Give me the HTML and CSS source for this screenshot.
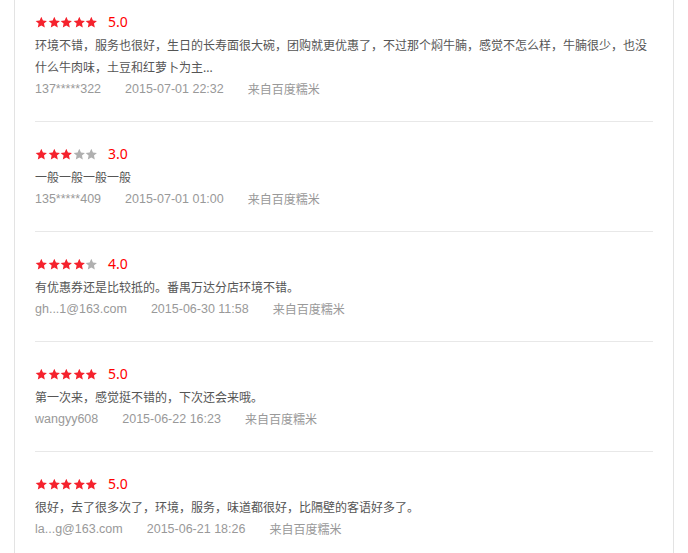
FILE: index.html
```html
<!DOCTYPE html>
<html lang="zh-CN">
<head>
    <meta charset="UTF-8">
    <meta name="viewport" content="width=device-width, initial-scale=1.0">
    <link rel="stylesheet" href="styles.css">
    <title>评论</title>
</head>
<body>
    <svg class="defs" width="0" height="0">
        <symbol id="star" viewBox="0 0 24 24">
            <path d="M12 1.2l3.2 7 7.6.8-5.7 5.1 1.6 7.5L12 17.8l-6.7 3.8 1.6-7.5L1.2 9l7.6-.8z"/>
        </symbol>
    </svg>

    <div class="comments">
        <div class="review">
            <div class="rate">
                <span class="stars">
                    <svg class="on"><use href="#star"/></svg><svg class="on"><use href="#star"/></svg><svg class="on"><use href="#star"/></svg><svg class="on"><use href="#star"/></svg><svg class="on"><use href="#star"/></svg>
                </span>
                <span class="score">5.0</span>
            </div>
            <p class="text">环境不错，服务也很好，生日的长寿面很大碗，团购就更优惠了，不过那个焖牛腩，感觉不怎么样，牛腩很少，也没什么牛肉味，土豆和红萝卜为主...</p>
            <div class="meta"><span>137*****322</span><span>2015-07-01 22:32</span><span class="src">来自百度糯米</span></div>
        </div>

        <div class="review">
            <div class="rate">
                <span class="stars">
                    <svg class="on"><use href="#star"/></svg><svg class="on"><use href="#star"/></svg><svg class="on"><use href="#star"/></svg><svg><use href="#star"/></svg><svg><use href="#star"/></svg>
                </span>
                <span class="score">3.0</span>
            </div>
            <p class="text">一般一般一般一般</p>
            <div class="meta"><span>135*****409</span><span>2015-07-01 01:00</span><span class="src">来自百度糯米</span></div>
        </div>

        <div class="review">
            <div class="rate">
                <span class="stars">
                    <svg class="on"><use href="#star"/></svg><svg class="on"><use href="#star"/></svg><svg class="on"><use href="#star"/></svg><svg class="on"><use href="#star"/></svg><svg><use href="#star"/></svg>
                </span>
                <span class="score">4.0</span>
            </div>
            <p class="text">有优惠券还是比较抵的。番禺万达分店环境不错。</p>
            <div class="meta"><span>gh...1@163.com</span><span>2015-06-30 11:58</span><span class="src">来自百度糯米</span></div>
        </div>

        <div class="review">
            <div class="rate">
                <span class="stars">
                    <svg class="on"><use href="#star"/></svg><svg class="on"><use href="#star"/></svg><svg class="on"><use href="#star"/></svg><svg class="on"><use href="#star"/></svg><svg class="on"><use href="#star"/></svg>
                </span>
                <span class="score">5.0</span>
            </div>
            <p class="text">第一次来，感觉挺不错的，下次还会来哦。</p>
            <div class="meta"><span>wangyy608</span><span>2015-06-22 16:23</span><span class="src">来自百度糯米</span></div>
        </div>

        <div class="review">
            <div class="rate">
                <span class="stars">
                    <svg class="on"><use href="#star"/></svg><svg class="on"><use href="#star"/></svg><svg class="on"><use href="#star"/></svg><svg class="on"><use href="#star"/></svg><svg class="on"><use href="#star"/></svg>
                </span>
                <span class="score">5.0</span>
            </div>
            <p class="text">很好，去了很多次了，环境，服务，味道都很好，比隔壁的客语好多了。</p>
            <div class="meta"><span>la...g@163.com</span><span>2015-06-21 18:26</span><span class="src">来自百度糯米</span></div>
        </div>
    </div>
</body>
</html>
```

FILE: styles.css
```css
body {
    margin: 0;
    background-color: #fff;
    font-family: "Noto Sans", "Noto Sans CJK SC", sans-serif;
    font-size: 12px;
    color: #555;
}
.defs {
    position: absolute;
}
.comments {
    margin: 0 14px;
    padding: 0 20px;
    border-left: 1px solid #e3e3e3;
    border-right: 1px solid #e3e3e3;
    min-height: 553px;
    box-sizing: border-box;
}
.review {
    padding: 22px 0 22px;
    border-bottom: 1px solid #e8e8e8;
}
.review:first-child {
    padding-top: 12px;
}
.rate {
    display: flex;
    align-items: center;
    height: 20px;
    margin-bottom: 3px;
}
.stars {
    display: flex;
}
.stars svg {
    width: 12.6px;
    height: 13px;
    fill: #b0b0b0;
}
.stars svg.on {
    fill: #f5222d;
}
.score {
    margin-left: 10px;
    font-size: 14px;
    color: #f00;
    line-height: 20px;
}
.text {
    margin: 0;
    line-height: 22px;
    color: #555;
}
.meta {
    display: flex;
    align-items: center;
    height: 20px;
    font-family: "Liberation Sans", "Noto Sans CJK SC", sans-serif;
    font-size: 12.5px;
    color: #999;
}
.meta span {
    margin-right: 24px;
    line-height: 20px;
}
.meta .src {
    font-family: "Noto Sans CJK SC", sans-serif;
    font-size: 12px;
}
```
